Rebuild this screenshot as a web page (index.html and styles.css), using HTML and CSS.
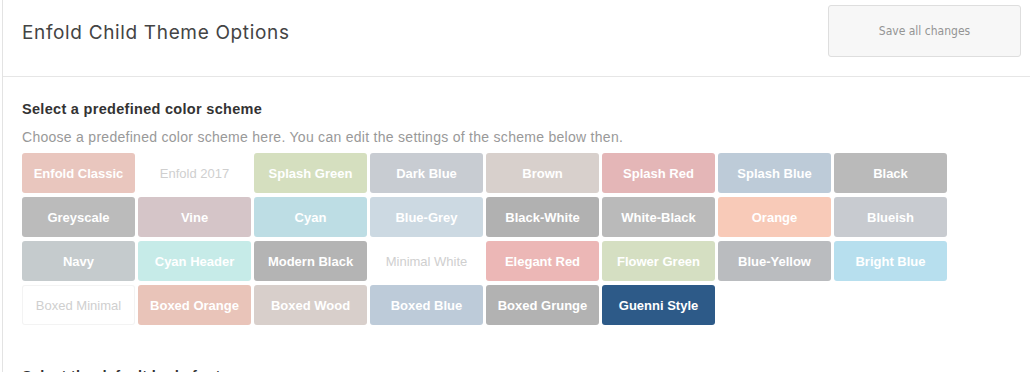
FILE: index.html
```html
<!DOCTYPE html>
<html>
<head>
<meta charset="utf-8">
<link rel="stylesheet" href="styles.css">
</head>
<body>
<div class="page">
  <header class="topbar">
    <h1 class="title">Enfold Child Theme Options</h1>
    <button class="save">Save all changes</button>
  </header>
  <section class="section">
    <h2 class="section-title">Select a predefined color scheme</h2>
    <p class="desc">Choose a predefined color scheme here. You can edit the settings of the scheme below then.</p>
    <div class="schemes">
      <div class="scheme c-enfold-classic">Enfold Classic</div>
      <div class="scheme c-white">Enfold 2017</div>
      <div class="scheme c-splash-green">Splash Green</div>
      <div class="scheme c-dark-blue">Dark Blue</div>
      <div class="scheme c-brown">Brown</div>
      <div class="scheme c-splash-red">Splash Red</div>
      <div class="scheme c-splash-blue">Splash Blue</div>
      <div class="scheme c-black">Black</div>

      <div class="scheme c-greyscale">Greyscale</div>
      <div class="scheme c-vine">Vine</div>
      <div class="scheme c-cyan">Cyan</div>
      <div class="scheme c-blue-grey">Blue-Grey</div>
      <div class="scheme c-black-white">Black-White</div>
      <div class="scheme c-white-black">White-Black</div>
      <div class="scheme c-orange">Orange</div>
      <div class="scheme c-blueish">Blueish</div>

      <div class="scheme c-navy">Navy</div>
      <div class="scheme c-cyan-header">Cyan Header</div>
      <div class="scheme c-modern-black">Modern Black</div>
      <div class="scheme c-white">Minimal White</div>
      <div class="scheme c-elegant-red">Elegant Red</div>
      <div class="scheme c-flower-green">Flower Green</div>
      <div class="scheme c-blue-yellow">Blue-Yellow</div>
      <div class="scheme c-bright-blue">Bright Blue</div>

      <div class="scheme c-white c-bordered">Boxed Minimal</div>
      <div class="scheme c-boxed-orange">Boxed Orange</div>
      <div class="scheme c-boxed-wood">Boxed Wood</div>
      <div class="scheme c-boxed-blue">Boxed Blue</div>
      <div class="scheme c-boxed-grunge">Boxed Grunge</div>
      <div class="scheme c-guenni">Guenni Style</div>
    </div>
  </section>
  <section class="section next">
    <h2 class="section-title">Select the default body font</h2>
  </section>
</div>
</body>
</html>
```
FILE: styles.css
```css
html, body {
  margin: 0;
  padding: 0;
  background: #fff;
  overflow: hidden;
}
body {
  font-family: "Liberation Sans", Arial, sans-serif;
  width: 1030px;
  height: 372px;
}
.page {
  margin-left: 2px;
  border-left: 1px solid #e3e3e3;
  height: 372px;
  overflow: hidden;
}
.topbar {
  display: flex;
  justify-content: space-between;
  align-items: flex-start;
  height: 76px;
  border-bottom: 1px solid #e6e6e6;
}
.title {
  margin: 21px 0 0 19px;
  font-family: "Inter", "Liberation Sans", sans-serif;
  font-weight: 400;
  font-size: 19px;
  letter-spacing: 0.65px;
  color: #444;
}
.save {
  margin: 5px 9px 0 0;
  width: 193px;
  height: 52px;
  background: #f7f7f7;
  border: 1px solid #dedede;
  border-radius: 3px;
  font-family: "DejaVu Sans", Verdana, sans-serif;
  font-stretch: condensed;
  font-size: 12px;
  color: #949494;
  padding: 0;
}
.section {
  padding: 0 0 0 19px;
}
.section-title {
  margin: 23px 0 0 0;
  font-size: 14.5px;
  letter-spacing: 0.3px;
  font-weight: 700;
  color: #333;
  line-height: 18px;
}
.desc {
  margin: 11px 0 0 0;
  font-size: 14px;
  letter-spacing: 0.28px;
  color: #999;
  line-height: 17px;
}
.schemes {
  display: grid;
  grid-template-columns: repeat(8, 113px);
  grid-auto-rows: 40px;
  column-gap: 3px;
  row-gap: 4px;
  margin-top: 7px;
}
.scheme {
  display: flex;
  align-items: center;
  justify-content: center;
  border-radius: 3px;
  font-size: 13px;
  font-weight: 700;
  color: #fff;
  white-space: nowrap;
}
.c-white { background: #fff; color: #cfcfcf; font-weight: 400; }
.c-bordered { box-shadow: inset 0 0 0 1px #f3f3f3; }
.c-enfold-classic { background: #e9c6be; }
.c-splash-green { background: #d5dfbf; }
.c-dark-blue { background: #c8ccd2; }
.c-brown { background: #d8d0cc; }
.c-splash-red { background: #e4b6b7; }
.c-splash-blue { background: #bdcbd8; }
.c-black { background: #bababa; }
.c-greyscale { background: #bbbbbb; }
.c-vine { background: #d5c5c8; }
.c-cyan { background: #bddde4; }
.c-blue-grey { background: #ccd9e2; }
.c-black-white { background: #b1b1b1; }
.c-white-black { background: #bababa; }
.c-orange { background: #f8cab8; }
.c-blueish { background: #c8cbd0; }
.c-navy { background: #c5cbcd; }
.c-cyan-header { background: #c6ebe8; }
.c-modern-black { background: #b4b4b4; }
.c-elegant-red { background: #ecb7b6; }
.c-flower-green { background: #d5dfc2; }
.c-blue-yellow { background: #babcbf; }
.c-bright-blue { background: #b7dfee; }
.c-boxed-orange { background: #e9c4b9; }
.c-boxed-wood { background: #d8cfcb; }
.c-boxed-blue { background: #bdcbd9; }
.c-boxed-grunge { background: #b2b2b2; }
.c-guenni { background: #2d5a88; }
.next .section-title {
  margin-top: 42px;
}
```
